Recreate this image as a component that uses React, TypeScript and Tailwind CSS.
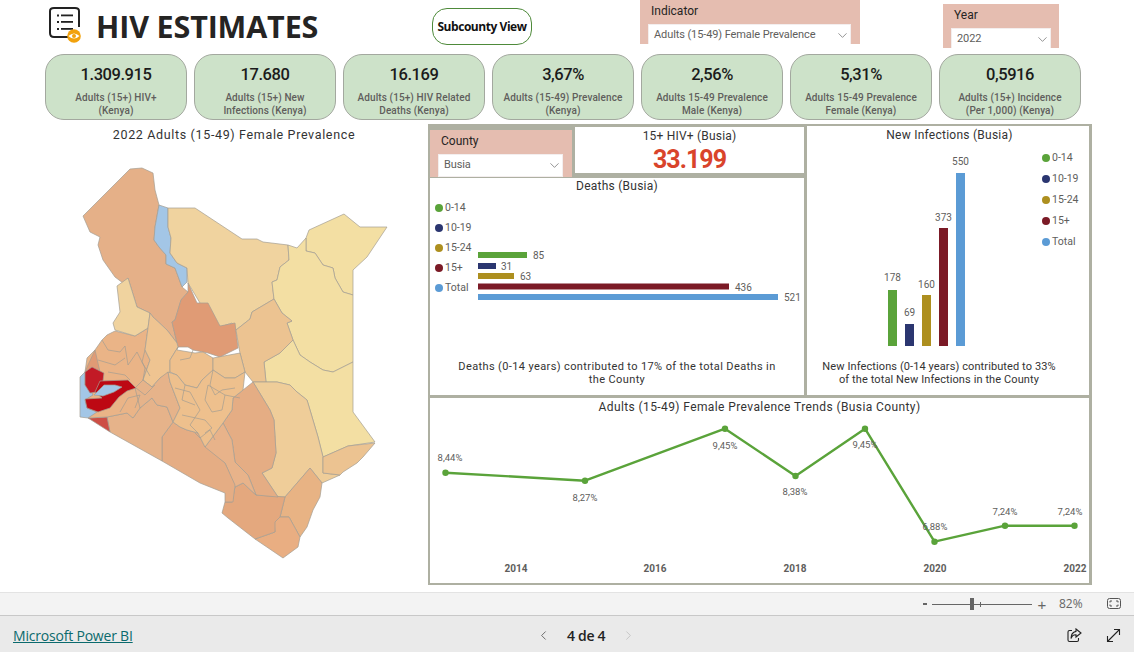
import React from "react";
import { ChevronDown, ChevronLeft, ChevronRight } from "lucide-react";

const cards = [
  ["1.309.915", "Adults (15+) HIV+", "(Kenya)"],
  ["17.680", "Adults (15+) New", "Infections (Kenya)"],
  ["16.169", "Adults (15+) HIV Related", "Deaths (Kenya)"],
  ["3,67%", "Adults (15-49) Prevalence", "(Kenya)"],
  ["2,56%", "Adults 15-49 Prevalence", "Male (Kenya)"],
  ["5,31%", "Adults 15-49 Prevalence", "Female (Kenya)"],
  ["0,5916", "Adults (15+) Incidence", "(Per 1,000) (Kenya)"],
];

const C = { green: "#5aa33a", navy: "#2b3670", gold: "#ad8f1f", maroon: "#7b1a26", blue: "#5b9bd5" };

const regions: [string, string][] = [
  ["#e5b088", "83,216 130,169 142,168 153,173 155,190 159,205 155,227 154,240 159,247 166,255 166,264 175,268 182,287 188,292 181,300 175,320 172,322 177,343 167,330 153,317 150,313 137,307 128,278 123,283 115,277 103,260 98,245 100,237 90,232"],
  ["#a3c6e6", "159,205 168,208 168,227 171,238 170,253 177,263 187,268 187,282 182,287 175,268 166,264 166,255 159,247 154,240 155,227"],
  ["#f0d39f", "168,208 195,208 242,239 257,239 263,242 288,245 289,260 280,267 277,280 272,282 274,299 252,312 250,319 236,330 232,323 220,327 207,310 200,303 188,283 187,268 177,263 170,253 171,238 168,227"],
  ["#e09b75", "188,283 197,303 208,303 220,326 235,323 238,348 220,357 208,353 193,350 188,347 178,347 177,343 172,322 175,320 181,300 188,292"],
  ["#f3dfa3", "306,238 309,230 344,214 360,227 387,227 367,257 353,270 353,295 343,292 335,278 333,268 323,265 315,253 306,251"],
  ["#f3dfa3", "288,245 297,248 306,238 306,251 315,253 323,265 333,268 335,278 343,292 353,295 353,362 333,372 323,370 310,362 300,355 293,340 287,323 292,321 282,313 274,299 272,282 277,280 280,267 289,260"],
  ["#f3dfa3", "353,362 353,412 375,442 348,446 323,457 318,437 310,410 307,400 297,392 290,385 277,382 266,382 264,362 280,353 293,340 300,355 310,362 323,370 333,372"],
  ["#ecc391", "274,299 252,312 250,319 236,330 239,348 240,353 245,372 253,382 266,382 264,362 280,353 293,340 287,323 292,321 282,313"],
  ["#efcd99", "253,382 266,382 277,382 290,385 297,392 307,400 310,410 318,437 323,457 323,473 340,475 322,483 310,468 285,497 278,497 262,473 272,468 276,453 274,420 270,410"],
  ["#ecc391", "323,457 348,446 375,443 363,457 357,463 343,472 340,475 323,473"],
  ["#e8b384", "310,468 322,483 320,497 313,510 307,527 300,537 289,517 280,517 285,497"],
  ["#e9ae82", "255,539 275,532 274,522 280,517 289,517 300,537 298,547 283,558"],
  ["#e4a87e", "235,487 243,483 256,495 285,497 280,517 275,522 275,532 255,539 228,518 222,513 225,502 232,502"],
  ["#e5ad84", "253,382 270,410 274,420 276,453 272,468 262,473 278,497 256,495 248,475 235,462 232,440 223,423 232,410 233,398 243,390"],
  ["#e8b38a", "200,447 205,447 223,423 232,440 235,462 248,475 256,495 243,483 235,487 225,463"],
  ["#e5ad84", "173,422 162,437 162,461 200,483 225,493 225,502 233,502 235,485 225,463 205,447 198,433 187,430 180,427"],
  ["#e6b38a", "107,417 127,413 133,418 140,408 152,398 157,405 167,407 173,422 162,437 162,461 110,432"],
  ["#cd4e45", "88,418 107,417 110,432"],
  ["#eab487", "95,350 102,340 107,335 115,331 135,336 148,328 145,350 150,360 143,380 152,387 140,408 133,418 127,413 107,417 88,418 85,400 85,372 87,358"],
  ["#f0d39f", "128,278 137,307 150,313 148,328 135,336 115,330 113,323 120,312 117,286"],
  ["#efc491", "150,313 153,317 167,330 177,343 178,347 170,360 170,373 160,378 152,387 143,380 150,360 145,350 148,328"],
  ["#eec08d", "177,350 195,353 203,352 213,358 213,370 202,380 197,388 185,385 177,375 170,372 170,360 178,347"],
  ["#ecc391", "213,358 240,353 245,372 235,378 225,378 213,370"],
  ["#e6b38a", "143,380 152,387 160,378 168,372 170,382 180,408 173,422 167,407 157,405 152,398 140,408 135,388"],
  ["#eec08d", "177,375 185,385 197,388 202,380 213,370 225,378 235,378 245,372 243,390 233,398 232,410 223,423 205,447 198,433 187,430 180,427 173,422 180,408 170,382 168,372"],
  ["#e09b75", "88,365 95,350 100,372 92,368 85,372"],
  ["#a3c6e6", "80,377 85,372 85,385 92,393 93,395 88,398 85,400 87,408 97,412 88,418 80,417"],
  ["#c21a26", "92,367 104,373 103,381 97,392 90,393 85,385 85,372"],
  ["#bd0813", "100,381 128,380 136,388 127,391 119,397 110,408 98,412 87,408 85,399 102,398 95,392"],
  ["#a3c6e6", "94,395 99,390 104,385 115,385 122,387 114,392 103,396"],
];

const lines = [
  "102,340 108,350 120,352 125,346 128,365 137,352 145,368 143,380",
  "98,360 115,365 125,358",
  "108,372 125,375 130,380",
  "136,388 145,395 155,385",
  "120,412 128,398 140,395 135,408",
  "175,388 190,392 200,410 190,425 198,433",
  "185,385 182,400 195,405",
  "213,370 210,385 215,395 222,390 235,388",
  "208,385 205,400 212,412 222,410 225,395",
  "208,385 225,395 240,398",
  "182,415 205,420 212,428 205,433",
  "195,433 200,438 210,430 215,440",
  "193,350 190,358 180,360",
  "145,350 142,362 150,376",
];

function Dot({ c }: { c: string }) {
  return <span className="w-[8px] h-[8px] rounded-full shrink-0" style={{ backgroundColor: c }} />;
}

function Legend({ items, gap }: { items: [string, string][]; gap: string }) {
  return (
    <div className={`flex flex-col ${gap} text-[10.5px] text-[#605e5c] leading-[13px] whitespace-nowrap`}>
      {items.map(([l, c]) => (
        <div key={l} className="flex items-center gap-[2px]">
          <Dot c={c} />
          <span>{l}</span>
        </div>
      ))}
    </div>
  );
}

const legendItems: [string, string][] = [
  ["0-14", C.green],
  ["10-19", C.navy],
  ["15-24", C.gold],
  ["15+", C.maroon],
  ["Total", C.blue],
];

function Dropdown({ text, w }: { text: string; w: string }) {
  return (
    <div className={`${w} h-[23px] shrink-0 bg-white border border-[#f3eeee] flex items-center justify-between pl-[5px] text-[11px] text-[#605e5c] tracking-[-0.1px]`}>
      <span>{text}</span>
      <ChevronDown size={15} strokeWidth={1} className="text-[#555]" />
    </div>
  );
}

export default function App() {
  const pts: [number, number, string, number, number][] = [
    [445.5, 472.7, "8,44%", 450, 461],
    [585, 480.7, "8,27%", 585, 501],
    [725, 428.7, "9,45%", 725, 449],
    [795.5, 476, "8,38%", 795, 495],
    [865, 428.7, "9,45%", 865, 448],
    [934.5, 541.7, "6,88%", 935, 530],
    [1005, 525.7, "7,24%", 1005, 515],
    [1070, 525.7, "7,24%", 1070, 515],
  ];
  const linePts = pts.map((p, i) => (i === 7 ? `1074.5,${p[1]}` : `${p[0]},${p[1]}`)).join(" ");
  return (
    <div className="w-[1134px] h-[652px] overflow-hidden bg-white flex flex-col [font-family:Roboto,sans-serif] text-[#252423]">
      <div className="h-[585px] flex flex-col shrink-0">
        {/* Header */}
        <div className="h-[54px] flex items-start shrink-0 overflow-hidden">
          <svg width="34" height="38" viewBox="0 0 34 38" className="ml-[48px] mt-[5px] shrink-0">
            <path d="M22 32 H6 Q2 32 2 28 V6 Q2 3 6 3 H27 Q31 3 31 6 V22" fill="none" stroke="#222" strokeWidth="2" />
            <g fill="#222">
              <rect x="9" y="9.5" width="2" height="2" /><rect x="13" y="9.5" width="12" height="1.8" />
              <rect x="9" y="16" width="2" height="2" /><rect x="13" y="16" width="12" height="1.8" />
              <rect x="9" y="23" width="2" height="2" /><rect x="13" y="23" width="12" height="1.8" />
            </g>
            <circle cx="26" cy="31" r="6.8" fill="#f2a20c" />
            <path d="M20.5 31 Q26 26 31.5 31 Q26 36 20.5 31 Z" fill="#fff" />
            <circle cx="26" cy="31" r="2" fill="#f2a20c" />
          </svg>
          <h1 className="ml-[14px] mt-[5px] w-[224px] shrink-0 text-[30.5px] leading-[42px] font-bold [font-family:'Open_Sans',sans-serif] text-[#252423] tracking-[-0.15px] whitespace-nowrap">HIV ESTIMATES</h1>
          <button className="ml-[112px] mt-[8px] w-[100px] h-[37px] shrink-0 rounded-[15px] border border-[#4e8a3a] bg-white text-[12px] font-bold text-[#111] [font-family:'Open_Sans',sans-serif] tracking-[-0.45px] whitespace-nowrap">Subcounty View</button>
          <div className="ml-[108px] w-[220px] h-[44px] shrink-0 bg-[#e5bdb0] pl-[8px] flex flex-col overflow-hidden">
            <span className="h-[24px] shrink-0 pl-[3px] pt-[4px] text-[12px] leading-[15px]">Indicator</span>
            <Dropdown text="Adults (15-49) Female Prevalence" w="w-[203px]" />
          </div>
          <div className="ml-[83px] mt-[4px] w-[116px] h-[44px] shrink-0 bg-[#e5bdb0] pl-[8px] flex flex-col overflow-hidden">
            <span className="h-[24px] shrink-0 pl-[3px] pt-[4px] text-[12px] leading-[15px]">Year</span>
            <Dropdown text="2022" w="w-[100px]" />
          </div>
        </div>

        {/* KPI cards */}
        <div className="h-[67px] pl-[45px] flex gap-[7px] shrink-0">
          {cards.map(([v, a, b]) => (
            <div key={v} className="w-[142px] h-[66px] rounded-[19px] bg-[#cde2c9] border border-[#a3a89f] flex flex-col items-center pt-[10px]">
              <div className="text-[16.5px] leading-[20px] font-medium text-[#1b1b1b] tracking-[-0.45px]">{v}</div>
              <div className="mt-[7px] text-[10px] leading-[12.5px] font-medium text-[#605e5c] text-center tracking-[0.1px] whitespace-nowrap">
                {a}<br />{b}
              </div>
            </div>
          ))}
        </div>

        {/* Main */}
        <div className="flex h-[461px] mt-[3px] shrink-0">
          <div className="w-[428px] flex flex-col shrink-0">
            <div className="h-[26px] pl-[40px] text-center text-[12.5px] leading-[22px] tracking-[0.65px] text-[#333] whitespace-nowrap">2022 Adults (15-49) Female Prevalence</div>
            <svg width="428" height="420" viewBox="0 150 428 420">
              {regions.map(([f, p], i) => (
                <polygon key={i} points={p} fill={f} stroke="#a39e92" strokeWidth="0.7" strokeLinejoin="round" />
              ))}
              {lines.map((p, i) => (
                <polyline key={i} points={p} fill="none" stroke="#a39e92" strokeWidth="0.7" />
              ))}
            </svg>
          </div>

          <div className="w-[664px] h-[461px] bg-[#aeb0a2] pl-[2px] pr-[3px] pt-[2px] pb-[2px] flex flex-col gap-[3px] shrink-0">
            <div className="flex gap-[3px] h-[269px] shrink-0">
              <div className="w-[374px] flex flex-col shrink-0">
                <div className="h-[52px] flex gap-[3px] shrink-0">
                  <div className="w-[142px] h-[47px] mt-[4px] bg-[#e5bdb0] pl-[8px] flex flex-col">
                    <span className="h-[24px] shrink-0 pl-[3px] pt-[4px] text-[12px] leading-[15px]">County</span>
                    <Dropdown text="Busia" w="w-[125px]" />
                  </div>
                  <div className="w-[229px] h-[46px] mt-[1px] bg-white flex flex-col items-center pt-[2px]">
                    <div className="text-[12px] leading-[14px] tracking-[0.2px] text-[#333]">15+ HIV+ (Busia)</div>
                    <div className="text-[25px] leading-[33px] font-bold text-[#d9442b] tracking-[-1px]">33.199</div>
                  </div>
                </div>
                <div className="h-[217px] bg-white flex flex-col">
                  <div className="text-center pt-[1px] text-[12px] leading-[14px] tracking-[0.25px] text-[#333]">Deaths (Busia)</div>
                  <div className="flex h-[160px] shrink-0 pl-[5px] pt-[8px] gap-[8px]">
                    <div className="w-[35px] shrink-0"><Legend items={legendItems} gap="gap-[7px]" /></div>
                    <svg width="330" height="152" viewBox="478 201 330 152" className="shrink-0">
                      {[
                        [252, 49, C.green, "85", 533],
                        [263, 18, C.navy, "31", 501],
                        [273, 36, C.gold, "63", 520],
                        [283.5, 251, C.maroon, "436", 735],
                        [294, 300, C.blue, "521", 784],
                      ].map(([y, w, c, l, tx]) => (
                        <g key={l as string}>
                          <rect x="478" y={y as number} width={w as number} height="6" fill={c as string} />
                          <text x={tx as number} y={(y as number) + 7} fontSize="10" fill="#605e5c">{l}</text>
                        </g>
                      ))}
                    </svg>
                  </div>
                  <div className="mt-[7px] px-[20px] text-center text-[11px] leading-[13px] tracking-[0.38px] text-[#333] whitespace-nowrap">
                    Deaths (0-14 years) contributed to 17% of the total Deaths in<br />the County
                  </div>
                </div>
              </div>
              <div className="w-[282px] bg-white flex flex-col shrink-0">
                <div className="text-center pl-[3px] text-[12px] leading-[18px] tracking-[0.25px] text-[#333]">New Infections (Busia)</div>
                <div className="flex h-[207px] shrink-0">
                  <svg width="234" height="207" viewBox="807 144 234 207" className="shrink-0">
                    {[
                      [888, 290, C.green, "178", 281],
                      [905, 324, C.navy, "69", 316],
                      [922, 295, C.gold, "160", 288],
                      [939, 228, C.maroon, "373", 221],
                      [956, 173, C.blue, "550", 165],
                    ].map(([x, t, c, l, ty]) => (
                      <g key={l as string}>
                        <rect x={x as number} y={t as number} width="9" height={346 - (t as number)} fill={c as string} />
                        <text x={(x as number) + 4.5} y={ty as number} fontSize="10" textAnchor="middle" fill="#605e5c">{l}</text>
                      </g>
                    ))}
                  </svg>
                  <div className="pt-[7px] pl-[1px]"><Legend items={legendItems} gap="gap-[8px]" /></div>
                </div>
                <div className="mt-[9px] pr-[18px] text-center text-[11px] leading-[13px] tracking-[0.1px] text-[#333] whitespace-nowrap">
                  New Infections (0-14 years) contributed to 33%<br />of the total New Infections in the County
                </div>
              </div>
            </div>
            <div className="h-[185px] bg-white flex flex-col shrink-0">
              <div className="text-center pt-[1px] text-[12px] leading-[17px] tracking-[0.4px] text-[#333]">Adults (15-49) Female Prevalence Trends (Busia County)</div>
              <svg width="659" height="167" viewBox="430 416 659 167" className="shrink-0">
                <polyline points={linePts} fill="none" stroke={C.green} strokeWidth="2.4" strokeLinejoin="round" />
                {pts.map((p, i) => (
                  <g key={i}>
                    <circle cx={i === 7 ? 1074.5 : p[0]} cy={p[1]} r="3.2" fill={C.green} />
                    <text x={p[3]} y={p[4]} fontSize="9.5" textAnchor="middle" fill="#605e5c">{p[2]}</text>
                  </g>
                ))}
                {[["2014", 516], ["2016", 655], ["2018", 795], ["2020", 935], ["2022", 1075]].map(([l, x]) => (
                  <text key={l as string} x={x as number} y="572" fontSize="10" fontWeight="700" textAnchor="middle" fill="#605e5c">{l}</text>
                ))}
              </svg>
            </div>
          </div>
        </div>
      </div>

      {/* Zoom bar */}
      <div className="h-[23px] mt-[7px] shrink-0 bg-[#f3f3f3] border-t border-[#e3e3e3] flex items-center justify-end pr-[13px] text-[#666]">
        <span className="w-[4px] h-[2px] bg-[#666]" />
        <div className="ml-[5px] w-[100px] h-[1px] bg-[#666] flex items-center pl-[38px]">
          <span className="w-[4px] h-[12px] bg-[#666] shrink-0" />
          <span className="ml-[6px] w-[1px] h-[5px] bg-[#666] shrink-0" />
        </div>
        <span className="ml-[5px] text-[15px] leading-none w-[10px] text-center [font-family:'Liberation_Sans',sans-serif]">+</span>
        <span className="ml-[12px] w-[24px] text-[12px] [font-family:'Open_Sans',sans-serif]">82%</span>
        <svg width="14" height="12" viewBox="0 0 14 12" className="ml-[24px]" fill="none" stroke="#555" strokeWidth="1">
          <rect x="0.5" y="0.5" width="13" height="10" rx="2" />
          <path d="M3 4.5V3H5M9 3H11V4.5M3 6.5V8H5M9 8H11V6.5" />
        </svg>
      </div>

      {/* Footer */}
      <div className="flex-1 pt-[2px] bg-[#eaeaea] border-t border-[#c8c8c8] grid grid-cols-[536px_auto_1fr] items-center [font-family:'Liberation_Sans',sans-serif]">
        <a className="pl-[13px] text-[14px] underline text-[#0b6a6d] [font-family:'Open_Sans',sans-serif] tracking-[-0.2px]">Microsoft Power BI</a>
        <div className="flex items-center text-[14px] text-[#222]">
          <ChevronLeft size={15} strokeWidth={1.2} className="text-[#444]" />
          <span className="mx-[16px] [font-family:'Open_Sans',sans-serif] font-semibold tracking-[-0.3px] whitespace-nowrap">4 de 4</span>
          <ChevronRight size={15} strokeWidth={1.2} className="text-[#bbb]" />
        </div>
        <div className="flex justify-end items-center pr-[13px] gap-[24px]">
          <svg width="15" height="15" viewBox="0 0 15 15" fill="none" stroke="#222" strokeWidth="1.1">
            <path d="M5 2.5H2.5Q1 2.5 1 4V12Q1 13.5 2.5 13.5H10Q11.5 13.5 11.5 12V10" />
            <path d="M9 1L14 5L9 9V6.8Q5.5 6.5 4 10.5Q4 4.5 9 3.4Z" />
          </svg>
          <svg width="15" height="15" viewBox="0 0 15 15" fill="none" stroke="#222" strokeWidth="1.1">
            <path d="M1.5 13.5L13.5 1.5M8 1.5H13.5V7M1.5 8V13.5H7" />
          </svg>
        </div>
      </div>
    </div>
  );
}
